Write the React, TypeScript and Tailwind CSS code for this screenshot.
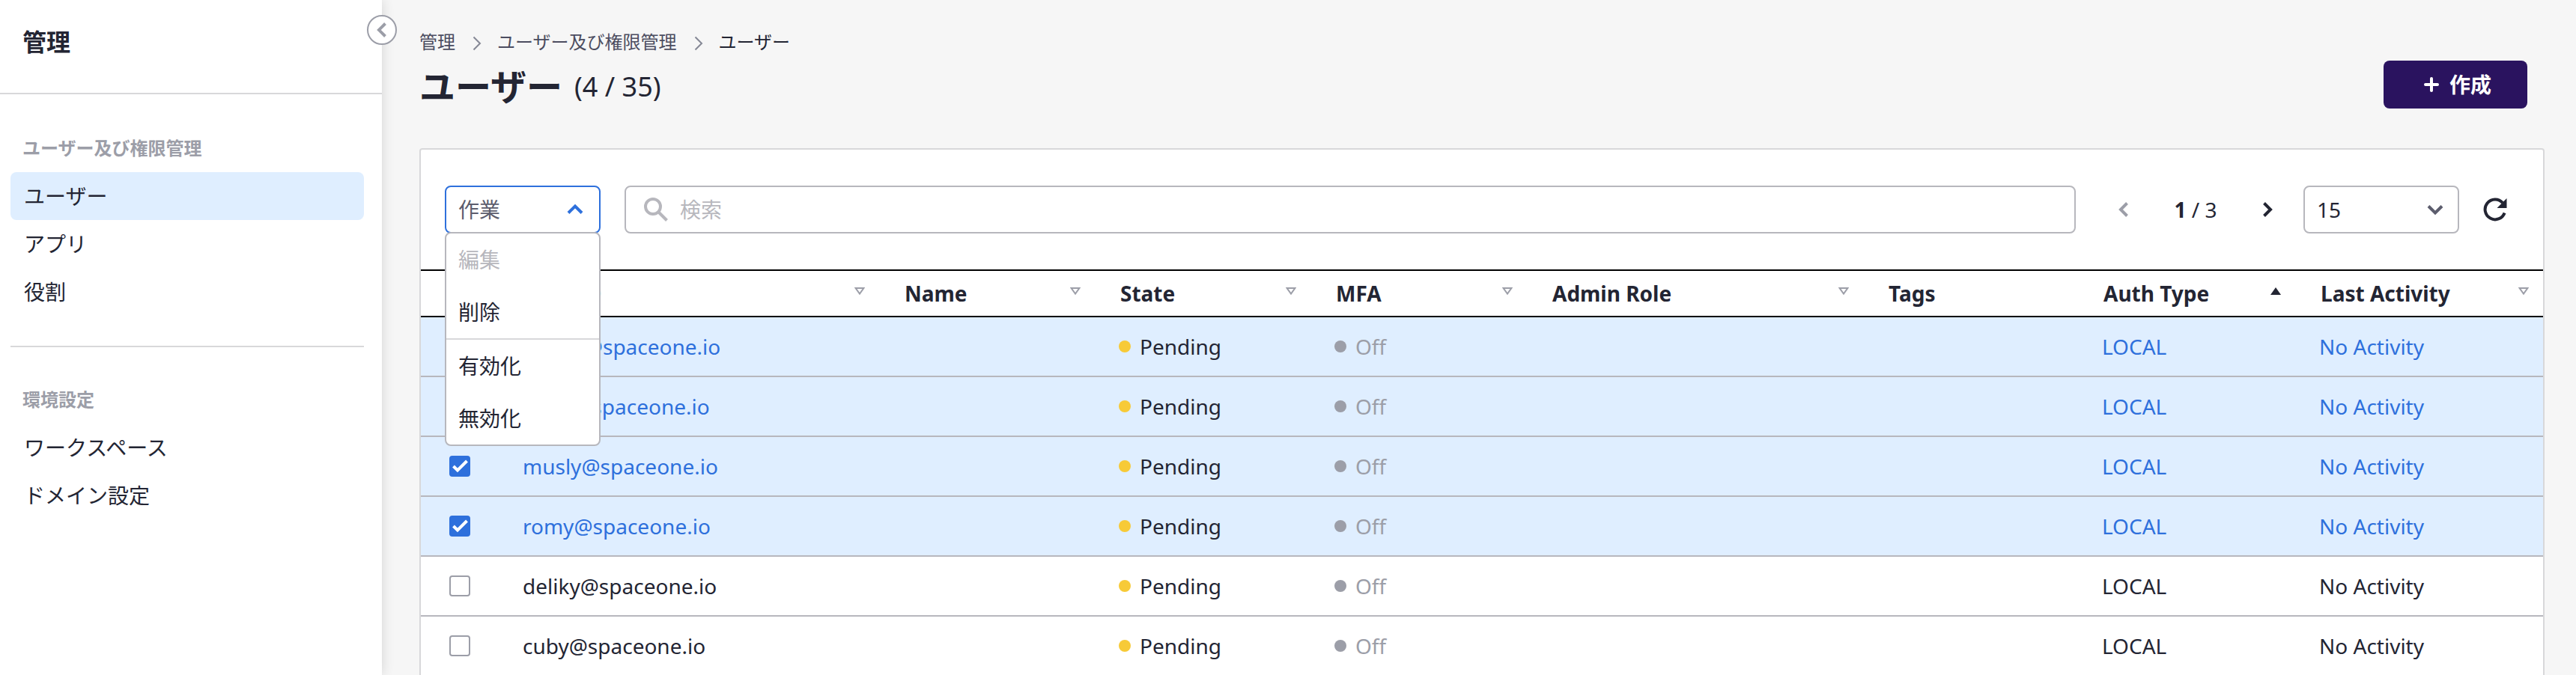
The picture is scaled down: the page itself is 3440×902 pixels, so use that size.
import React, { useState } from "react";

type Menu = { title: string; items: string[] };

const menus: Menu[] = [
  { title: "ユーザー及び権限管理", items: ["ユーザー", "アプリ", "役割"] },
  { title: "環境設定", items: ["ワークスペース", "ドメイン設定"] },
];

type Sort = "none" | "idle" | "asc";

const columns: { label: string; sort: Sort; width: string }[] = [
  { label: "User ID", sort: "idle", width: "w-[508px]" },
  { label: "Name", sort: "idle", width: "w-[288px]" },
  { label: "State", sort: "idle", width: "w-[288px]" },
  { label: "MFA", sort: "idle", width: "w-[289px]" },
  { label: "Admin Role", sort: "idle", width: "w-[449px]" },
  { label: "Tags", sort: "none", width: "w-[287px]" },
  { label: "Auth Type", sort: "asc", width: "w-[290px]" },
  { label: "Last Activity", sort: "idle", width: "w-[331px]" },
];

const users = [
  "danny@spaceone.io",
  "lucky@spaceone.io",
  "musly@spaceone.io",
  "romy@spaceone.io",
  "deliky@spaceone.io",
  "cuby@spaceone.io",
];

function Chevron({ d, className, size = 32, stroke = 4 }: { d: string; className: string; size?: number; stroke?: number }) {
  return (
    <svg width={size} height={size} viewBox="0 0 32 32" fill="none" stroke="currentColor" strokeWidth={stroke} className={className} aria-hidden="true">
      <path d={d} />
    </svg>
  );
}

const LEFT = "M20.5 7.5 L12 16 L20.5 24.5";
const RIGHT = "M11.5 7.5 L20 16 L11.5 24.5";
const UP = "M7 20.5 L16 11.5 L25 20.5";
const DOWN = "M7 11.5 L16 20.5 L25 11.5";

function SortIcon({ sort }: { sort: Sort }) {
  if (sort === "none") return null;
  return sort === "asc" ? (
    <svg width="14" height="10" viewBox="0 0 14 10" className="mb-1.5 text-[#232533]" aria-hidden="true">
      <path d="M7 0 L14 10 H0 Z" fill="currentColor" />
    </svg>
  ) : (
    <svg width="14" height="10" viewBox="0 0 14 10" className="mb-1.5 text-[#9c9ea8]" aria-hidden="true">
      <path d="M1.6 1 H12.4 L7 8.6 Z" fill="none" stroke="currentColor" strokeWidth="2" />
    </svg>
  );
}

function Sidebar() {
  return (
    <aside className="relative z-10 w-[510px] shrink-0 bg-white shadow-[0_0_16px_rgba(0,0,0,0.14)]">
      <div className="flex h-[126px] items-start border-b-2 border-[#d8d8da] px-[30px] pt-8">
        <h2 className="text-[32px] leading-12 font-bold">管理</h2>
      </div>
      <button aria-label="サイドバーを閉じる" className="absolute top-5 -right-5 flex size-10 items-center justify-center rounded-full border-2 border-[#9c9ea8] bg-white">
        <Chevron d={LEFT} className="text-[#9c9ea8]" />
      </button>
      <nav className="pr-6 pl-3.5">
        {menus.map((menu, index) => (
          <section key={menu.title} className={index === 0 ? "pt-12" : "mt-10 border-t-2 border-[#d8d8da] pt-[46px]"}>
            <h3 className="mb-2 px-4 text-2xl leading-12 font-bold text-[#9c9ea8]">{menu.title}</h3>
            <ul>
              {menu.items.map((item) => (
                <li key={item}>
                  <a
                    href="#"
                    className={
                      item === "ユーザー"
                        ? "block h-16 rounded-lg bg-[#dfeeff] px-[18px] text-[28px] leading-16"
                        : "block h-16 rounded-lg px-[18px] text-[28px] leading-16"
                    }
                  >
                    {item}
                  </a>
                </li>
              ))}
            </ul>
          </section>
        ))}
      </nav>
    </aside>
  );
}

function Breadcrumbs() {
  return (
    <nav aria-label="breadcrumb" className="flex h-8 items-center gap-2 text-2xl leading-8 text-[#4c4d60]">
      <a href="#">管理</a>
      <Chevron d="M12.5 9.5 L21 18 L12.5 26.5" className="mx-1 text-[#858895]" stroke={2} />
      <a href="#">ユーザー及び権限管理</a>
      <Chevron d="M12.5 9.5 L21 18 L12.5 26.5" className="mx-1 text-[#858895]" stroke={2} />
      <span className="text-[#232533]">ユーザー</span>
    </nav>
  );
}

function ActionMenu() {
  const item = "block h-[70px] w-full px-4 text-left text-[28px] leading-[70px]";
  return (
    <div className="relative w-[208px]">
      <button aria-expanded="true" className="flex h-16 w-full items-center justify-between rounded-lg border-2 border-[#2e70dc] bg-white pr-4 pl-4 text-[28px] text-[#5c5d6d]">
        作業
        <Chevron d={UP} className="text-[#2e70dc]" />
      </button>
      <div role="menu" className="absolute top-[62px] left-0 z-10 w-full rounded-lg border-2 border-[#b7b7bd] bg-white">
        <button role="menuitem" disabled className={item + " text-[#b7b7bd]"}>編集</button>
        <button role="menuitem" className={item}>削除</button>
        <hr className="border-t-2 border-[#d8d8da]" />
        <button role="menuitem" className={item}>有効化</button>
        <button role="menuitem" className={item}>無効化</button>
      </div>
    </div>
  );
}

function Toolbar() {
  return (
    <div className="flex items-center py-12 pr-10 pl-8">
      <ActionMenu />
      <label className="ml-8 flex h-16 flex-1 items-center gap-4 rounded-lg border-2 border-[#b7b7bd] bg-white px-6">
        <svg width="32" height="32" viewBox="0 0 32 32" fill="none" stroke="#b7b7bd" strokeWidth="4" aria-hidden="true">
          <circle cx="12" cy="12" r="10" />
          <path d="M19.5 19.5 L30.5 30.5" />
        </svg>
        <input type="search" aria-label="検索" placeholder="検索" className="h-full min-w-0 flex-1 bg-transparent text-[28px] outline-none placeholder:text-[#b7b7bd]" />
      </label>
      <button aria-label="前のページ" className="ml-10 flex size-12 items-center justify-center text-[#9c9ea8]">
        <Chevron d={LEFT} className="" />
      </button>
      <p className="w-36 text-center text-[28px] leading-16">
        <b>1</b> / 3
      </p>
      <button aria-label="次のページ" className="flex size-12 items-center justify-center">
        <Chevron d={RIGHT} className="" />
      </button>
      <div className="relative ml-6 w-[208px]">
        <select aria-label="表示件数" defaultValue="15" className="h-16 w-full appearance-none rounded-lg border-2 border-[#b7b7bd] bg-white px-4 text-[28px]">
          <option>15</option>
          <option>30</option>
          <option>45</option>
        </select>
        <Chevron d={DOWN} className="pointer-events-none absolute top-4 right-4 text-[#5c5d6d]" />
      </div>
      <button aria-label="更新" className="ml-6 flex size-12 items-center justify-center">
        <svg width="32" height="32" viewBox="0 0 32 32" fill="none" aria-hidden="true">
          <path d="M28.6 20.5 A13.4 13.4 0 1 1 26 7" stroke="currentColor" strokeWidth="4" />
          <path d="M31.5 1 V14 H18.5 Z" fill="currentColor" />
        </svg>
      </button>
    </div>
  );
}

function UserTable() {
  const [selected, setSelected] = useState<boolean[]>([true, true, true, true, false, false]);
  const toggle = (row: number) => setSelected(selected.map((on, i) => (i === row ? !on : on)));

  return (
    <table className="w-full table-fixed border-separate border-spacing-0 text-[28px] leading-10">
      <thead>
        <tr>
          <th className="h-16 w-[104px] border-y-2 border-black" aria-label="選択" />
          {columns.map((column) => (
            <th key={column.label} className={column.width + " h-16 border-y-2 border-black py-0 pr-[19px] pl-[34px] text-left font-bold"}>
              <div className="flex items-center justify-between">
                {column.label}
                <SortIcon sort={column.sort} />
              </div>
            </th>
          ))}
        </tr>
      </thead>
      <tbody>
        {users.map((email, row) => {
          const on = selected[row];
          const cell = "h-20 border-b-2 border-[#b7b7bd] py-0 pl-8";
          const tone = on ? " text-[#2e70dc]" : "";
          return (
            <tr key={email} className={on ? "bg-[#dfeeff]" : "bg-white"}>
              <td className="h-20 border-b-2 border-[#b7b7bd] py-0 pl-[38px]">
                <span className="relative block size-7">
                  <input
                    type="checkbox"
                    aria-label={email}
                    checked={on}
                    onChange={() => toggle(row)}
                    className="block size-7 appearance-none rounded-sm border-2 border-[#9c9ea8] bg-white checked:border-[#2e70dc] checked:bg-[#2e70dc]"
                  />
                  {on && (
                    <svg width="28" height="28" viewBox="0 0 28 28" fill="none" stroke="#ffffff" strokeWidth="4" className="pointer-events-none absolute inset-0" aria-hidden="true">
                      <path d="M5.5 14 L11 19.5 L23.5 7" />
                    </svg>
                  )}
                </span>
              </td>
              <td className={cell + tone}>{email}</td>
              <td className={cell} />
              <td className={cell}>
                <span className="flex items-center gap-3">
                  <i className="size-4 rounded-full bg-[#f7ca37]" />
                  Pending
                </span>
              </td>
              <td className={cell}>
                <span className="flex items-center gap-3 text-[#9c9ea8]">
                  <i className="size-4 rounded-full bg-[#9c9ea8]" />
                  Off
                </span>
              </td>
              <td className={cell} />
              <td className={cell} />
              <td className={cell + tone}>LOCAL</td>
              <td className={cell + tone}>No Activity</td>
            </tr>
          );
        })}
      </tbody>
    </table>
  );
}

export default function App() {
  return (
    <div lang="ja" className="flex h-screen overflow-hidden bg-[#f6f6f6] font-['Noto_Sans','Noto_Sans_CJK_JP',sans-serif] text-[#232533]">
      <Sidebar />
      <main className="min-w-0 flex-1 pt-10 pr-[42px] pl-[50px]">
        <Breadcrumbs />
        <header className="mt-[9px] mb-[53px] flex h-16 items-center justify-between pr-[23px]">
          <h1 className="flex items-center gap-4 pt-1.5 text-5xl leading-16 font-bold">
            ユーザー
            <span className="text-4xl font-normal">(4 / 35)</span>
          </h1>
          <button className="flex h-16 items-center gap-2 rounded-lg bg-[#2a135f] px-12 text-[28px] font-bold text-white">
            <svg width="32" height="32" viewBox="0 0 32 32" fill="none" stroke="currentColor" strokeWidth="4" strokeLinecap="round" aria-hidden="true">
              <path d="M16 8 V24 M8 16 H24" />
            </svg>
            作成
          </button>
        </header>
        <section className="rounded-t border-2 border-[#d8d8da] bg-white">
          <Toolbar />
          <UserTable />
        </section>
      </main>
    </div>
  );
}
